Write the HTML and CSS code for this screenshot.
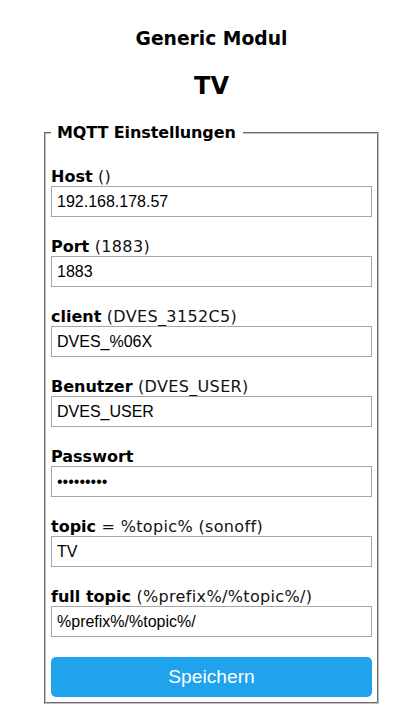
FILE: index.html
```html
<!DOCTYPE html>
<html lang="de">
<head>
<meta charset="utf-8">
<title>Generic Modul - MQTT</title>
<link rel="stylesheet" href="styles.css">
</head>
<body>
<div class="page">
  <div class="wrap">
    <h3 class="module">Generic Modul</h3>
    <h2 class="device">TV</h2>
    <fieldset class="box">
      <legend class="legend">MQTT Einstellungen</legend>
      <form class="form">
        <div class="field">
          <span class="lbl"><b class="key">Host</b> ()</span>
          <input class="inp" type="text" value="192.168.178.57">
        </div>
        <div class="field">
          <span class="lbl"><b class="key">Port</b> (1883)</span>
          <input class="inp" type="text" value="1883">
        </div>
        <div class="field">
          <span class="lbl"><b class="key">client</b> (DVES_3152C5)</span>
          <input class="inp" type="text" value="DVES_%06X">
        </div>
        <div class="field">
          <span class="lbl"><b class="key">Benutzer</b> (DVES_USER)</span>
          <input class="inp" type="text" value="DVES_USER">
        </div>
        <div class="field">
          <span class="lbl"><b class="key">Passwort</b></span>
          <input class="inp" type="password" value="123456789">
        </div>
        <div class="field">
          <span class="lbl"><b class="key">topic</b> = %topic% (sonoff)</span>
          <input class="inp" type="text" value="TV">
        </div>
        <div class="field">
          <span class="lbl"><b class="key">full topic</b> (%prefix%/%topic%/)</span>
          <input class="inp" type="text" value="%prefix%/%topic%/">
        </div>
        <button class="save" type="button">Speichern</button>
      </form>
    </fieldset>
  </div>
</div>
</body>
</html>
```

FILE: styles.css
```css
html, body {
  margin: 0;
  padding: 0;
  background: #ffffff;
}

body {
  font-family: "DejaVu Sans", Verdana, sans-serif;
  font-size: 16px;
  color: #000000;
}

.page {
  padding-left: 8px;
}

.wrap {
  width: 335px;
  margin: 0 auto;
  display: flex;
  flex-direction: column;
}

.module {
  margin: 28px 0 0;
  font-size: 18.72px;
  line-height: 22px;
  font-weight: bold;
  text-align: center;
}

.device {
  margin: 22px 0 0;
  font-size: 24px;
  line-height: 28px;
  font-weight: bold;
  text-align: center;
}

.box {
  margin: 24px 0 0;
  padding: 0 5px 5px;
  border: 2px groove #c0c0c0;
  min-width: 0;
}

.legend {
  margin-left: 0;
  padding: 0 7px 0 6px;
  font-weight: bold;
  line-height: 18px;
  letter-spacing: -0.1px;
}

.form {
  display: flex;
  flex-direction: column;
  gap: 21px;
  padding-top: 26px;
  margin: 0;
}

.field {
  display: flex;
  flex-direction: column;
}

.lbl {
  line-height: 18px;
  letter-spacing: 0.35px;
  color: #111111;
}

.key {
  letter-spacing: 0;
  color: #000000;
}

.inp {
  box-sizing: border-box;
  width: 100%;
  height: 31px;
  margin: 0;
  padding: 5px;
  border: 1px solid #a6a6a6;
  border-radius: 0;
  font-family: "Liberation Sans", Arial, sans-serif;
  font-size: 16px;
  line-height: 19px;
  color: #000000;
  background: #ffffff;
}

.save {
  margin-top: -1px;
  height: 40px;
  border: 0;
  border-radius: 5px;
  background: #1fa3ec;
  color: #ffffff;
  font-family: "Liberation Sans", Arial, sans-serif;
  font-size: 19.2px;
  line-height: 40px;
  padding: 0;
  width: 100%;
}
```
